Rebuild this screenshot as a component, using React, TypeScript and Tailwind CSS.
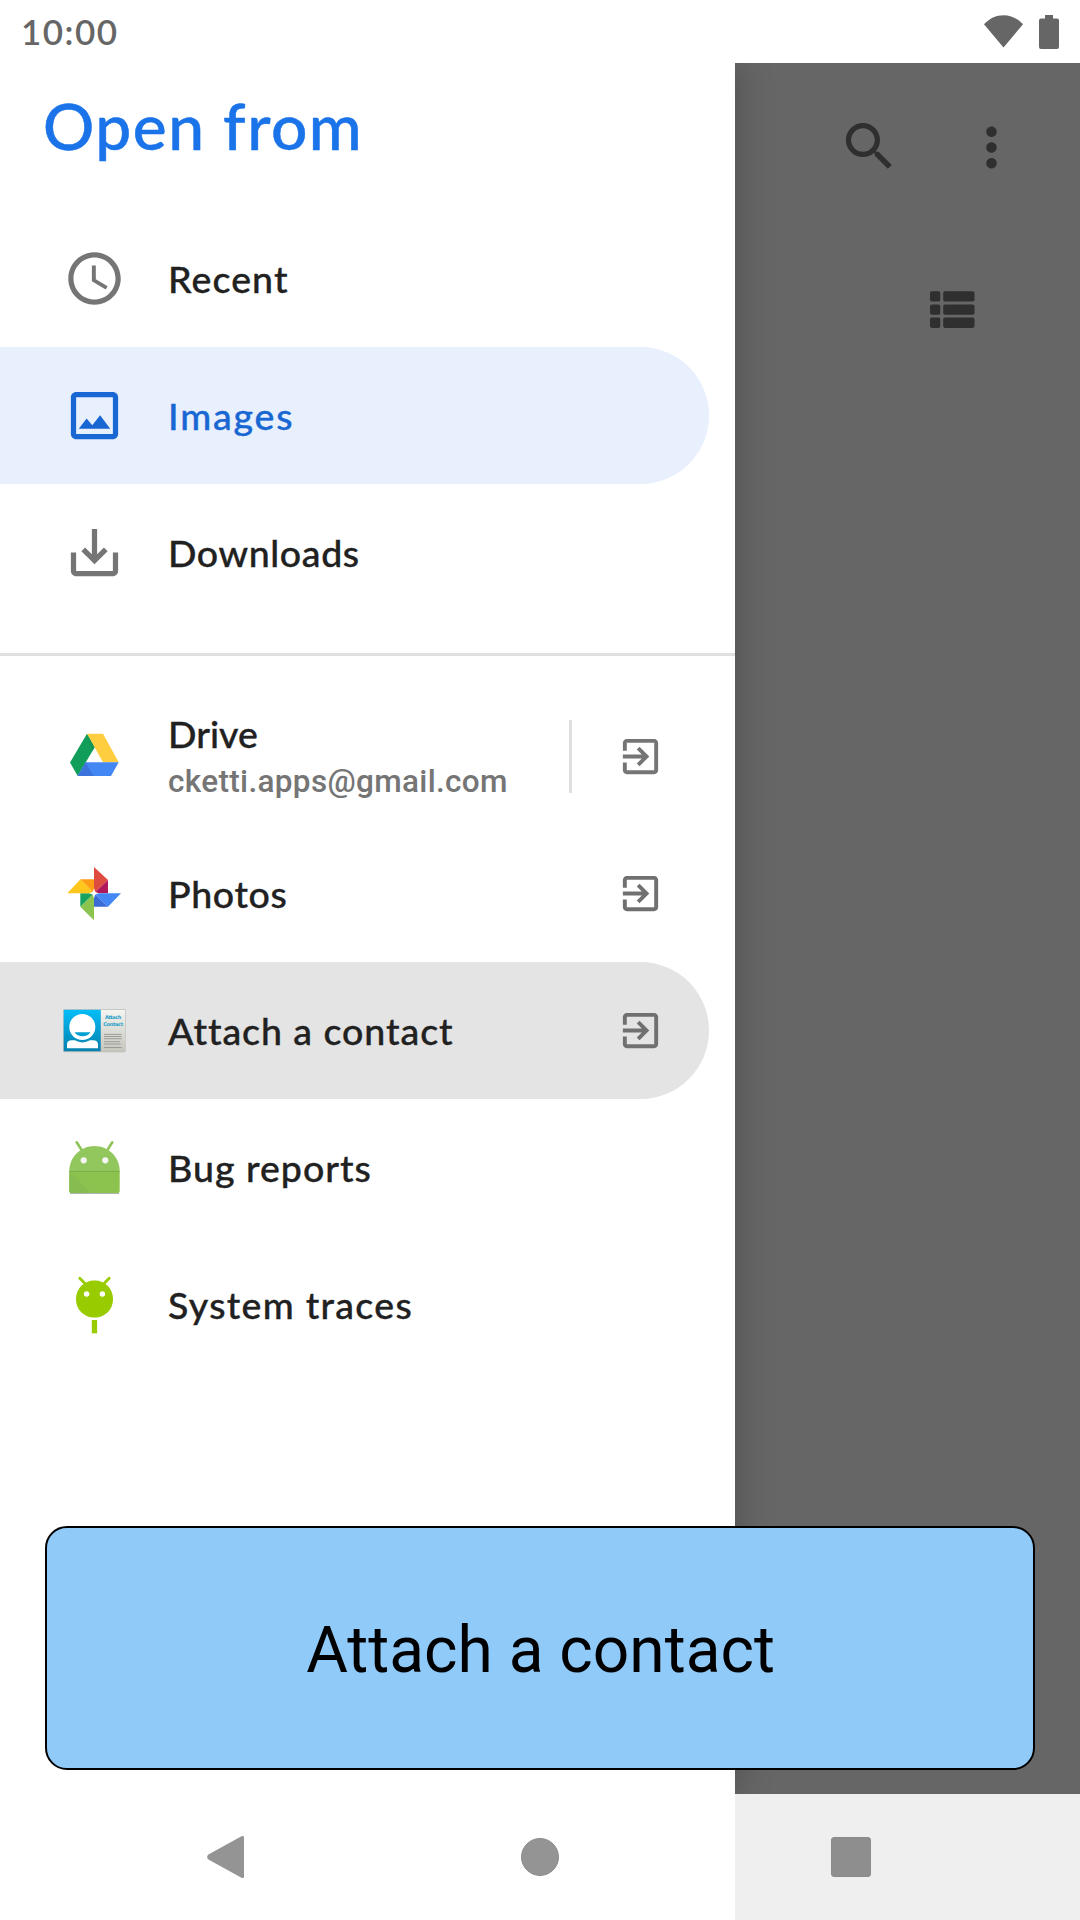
import React from "react";
import type { ReactNode } from "react";

const ROW = "flex h-[137px] shrink-0 items-center pl-[63px]";
const LABEL =
  "pt-px font-['Lato',sans-serif] text-[37.5px] font-medium leading-[44px] whitespace-nowrap [-webkit-text-stroke:0.35px] [font-variant-ligatures:none]";

function MaterialIcon({ d, className }: { d: string; className: string }) {
  return (
    <svg viewBox="0 0 24 24" fill="currentColor" className={className}>
      <path d={d} />
    </svg>
  );
}

const PATHS = {
  clock:
    "M11.99 2C6.47 2 2 6.48 2 12s4.47 10 9.99 10C17.52 22 22 17.52 22 12S17.52 2 11.99 2zM12 20c-4.42 0-8-3.58-8-8s3.58-8 8-8 8 3.58 8 8-3.58 8-8 8zM12.5 7H11v6l5.25 3.15.75-1.23-4.5-2.67z",
  image:
    "M19 5v14H5V5h14m0-2H5c-1.1 0-2 .9-2 2v14c0 1.1.9 2 2 2h14c1.1 0 2-.9 2-2V5c0-1.1-.9-2-2-2zm-4.86 8.86l-3 3.87L9 13.14 6 17h12l-3.86-5.14z",
  download:
    "M19 12v7H5v-7H3v7c0 1.1.9 2 2 2h14c1.1 0 2-.9 2-2v-7h-2zm-6 .67l2.59-2.58L17 11.5l-5 5-5-5 1.41-1.41L11 12.67V3h2v9.67z",
  exit: "M10.09 15.59L11.5 17l5-5-5-5-1.41 1.41L12.67 11H3v2h9.67l-2.58 2.59zM19 3H5c-1.11 0-2 .9-2 2v4h2V5h14v14H5v-4H3v4c0 1.1.89 2 2 2h14c1.1 0 2-.9 2-2V5c0-1.1-.9-2-2-2z",
  search:
    "M15.5 14h-.79l-.28-.27C15.41 12.59 16 11.11 16 9.5 16 5.91 13.09 3 9.5 3S3 5.91 3 9.5 5.91 16 9.5 16c1.61 0 3.09-.59 4.23-1.57l.27.28v.79l5 4.99L20.49 19l-4.99-5zm-6 0C7.01 14 5 11.99 5 9.5S7.01 5 9.5 5 14 7.01 14 9.5 11.99 14 9.5 14z",
  more: "M12 8c1.1 0 2-.9 2-2s-.9-2-2-2-2 .9-2 2 .9 2 2 2zm0 2c-1.1 0-2 .9-2 2s.9 2 2 2 2-.9 2-2-.9-2-2-2zm0 6c-1.1 0-2 .9-2 2s.9 2 2 2 2-.9 2-2-.9-2-2-2z",
};

const ICON = "size-[63px] shrink-0";

function DriveIcon() {
  return (
    <svg viewBox="3 0 63 63" className={ICON}>
      <path d="M27 8.7 34.7 22.2 17.7 51 10 37.5z" fill="#119e5a" />
      <path d="M27 8.7H43L58.7 37.3H43z" fill="#ffcd40" />
      <path d="M25.7 37.3H58.7L51 51H17.7z" fill="#4387f5" />
      <path d="M25.7 37.3 33.5 51H17.7z" fill="#3a73db" />
      <path d="M27 8.7 34.7 22.2 32.4 26z" fill="#0c8a4c" opacity=".5" />
    </svg>
  );
}

function PhotosIcon() {
  return (
    <svg viewBox="3 2 63 63" className={ICON}>
      <path d="M34 7 48 20 34 33.2z" fill="#de4c3f" />
      <path d="M48 20V33.2H34z" fill="#b0185c" />
      <path d="M34 33.2H61L48 46.8z" fill="#4387f5" />
      <path d="M34 33.2 48 46.8H34z" fill="#3a6bd6" />
      <path d="M34 33.2V60.2L20.3 46.8z" fill="#8cc450" />
      <path d="M20.3 33.2H34L20.3 46.8z" fill="#17a260" />
      <path d="M7.3 33.2 20.5 19.3 34 33.2z" fill="#ffc61c" />
      <path d="M20.5 19.3H34V33.2z" fill="#ff9e15" />
      <path d="M34 28.2 35.3 32 39 33.2 35.3 34.5 34 38.3 32.7 34.5 29 33.2 32.7 32z" fill="#fff" />
    </svg>
  );
}

function ContactIcon() {
  return (
    <svg viewBox="23 39 63 63" className={ICON}>
      <defs>
        <linearGradient id="cardBlue" x1="0" y1="0" x2="0" y2="1">
          <stop offset="0" stopColor="#05bdf8" />
          <stop offset="1" stopColor="#0480ad" />
        </linearGradient>
        <linearGradient id="cardPaper" x1="0" y1="0" x2="0" y2="1">
          <stop offset="0" stopColor="#f4f4f0" />
          <stop offset="1" stopColor="#c6c6be" />
        </linearGradient>
      </defs>
      <rect x="23.2" y="49.2" width="62.4" height="43" rx="1" fill="#bdbdb8" />
      <rect x="23.7" y="49.8" width="37" height="41.4" fill="url(#cardBlue)" />
      <rect x="61" y="50" width="24" height="41.4" fill="url(#cardPaper)" />
      <circle cx="42.3" cy="67" r="13" fill="#fff" />
      <path d="M34.7 72.3H50.3C48 77.6 37 77.6 34.7 72.3z" fill="#069fd2" />
      <path d="M27 88.2V84.5Q27 80.3 32 80.3H34.8Q42.3 84.5 50 80.3H52.8Q58 80.3 58 84.5V88.2z" fill="#fff" />
      <g
        fill="#1c9ccb"
        textAnchor="middle"
        className="font-['DejaVu_Sans',sans-serif] text-[5.1px] font-bold"
      >
        <text x="73.2" y="59.2" textLength="16.5">Attach</text>
        <text x="73.2" y="65.9" textLength="20">Contact</text>
      </g>
      <path
        d="M64 74.4H81.6M64 76.5H81.6M64 78.7H81.6M64 81.7H80M64 84H80.6M64 87.5H81.6"
        stroke="#8f8f8a"
        strokeWidth=".8"
      />
    </svg>
  );
}

function BugIcon() {
  return (
    <svg viewBox="13 26 63 63" className={ICON}>
      <path d="M20.5 83.4H68.5" stroke="#000" strokeOpacity=".3" strokeWidth="1.2" strokeLinecap="round" />
      <path d="M26.7 32.3 31.2 39.4M62.3 32.3 57.8 39.4" stroke="#8fc558" strokeWidth="2.7" strokeLinecap="round" />
      <path d="M19.3 61C19.3 47 30.6 36 44.5 36S69.7 47 69.7 61z" fill="#91c75c" />
      <path d="M19.3 61H69.7V80.4Q69.7 83 67 83H22Q19.3 83 19.3 80.4z" fill="#8bc34e" />
      <path d="M19.3 61 41 83H22Q19.3 83 19.3 80.4z" fill="#87bd50" />
      <path d="M19.3 61.4H69.7" stroke="#77a946" strokeWidth=".8" />
      <circle cx="33.7" cy="50.3" r="3.1" fill="#f5f5f5" />
      <circle cx="55.3" cy="50.3" r="3.1" fill="#f5f5f5" />
    </svg>
  );
}

function TracesIcon() {
  return (
    <svg viewBox="13 163 63 63" className={ICON}>
      <path d="M29.8 168.3 35.5 174M59.2 168.3 53.5 174" stroke="#9c0" strokeWidth="2.8" strokeLinecap="round" />
      <rect x="26" y="170.6" width="37" height="37" rx="18" fill="#9c0" />
      <rect x="41.8" y="210" width="5.3" height="13.3" fill="#9c0" />
      <circle cx="36.6" cy="184" r="2.7" fill="#fff" />
      <circle cx="52.4" cy="184" r="2.7" fill="#fff" />
    </svg>
  );
}

function Row({
  icon,
  label,
  tracking,
  tone = "text-[#212121]",
  background = "",
  exit = false,
}: {
  icon: ReactNode;
  label: string;
  tracking: string;
  tone?: string;
  background?: string;
  exit?: boolean;
}) {
  return (
    <div className={`${ROW} mr-[26px] rounded-r-full ${background}`}>
      {icon}
      <span className={`${LABEL} ml-[42px] flex-1 ${tracking} ${tone}`}>{label}</span>
      {exit && <MaterialIcon d={PATHS.exit} className="mr-[45px] size-[47px] text-[#707070]" />}
    </div>
  );
}

function Drawer() {
  return (
    <div className="flex w-[735px] shrink-0 flex-col bg-white shadow-[0_0_34px_rgba(0,0,0,0.25)]">
      <div className="flex h-[147px] shrink-0 items-center pb-[22px] pl-[43px]">
        <h1 className="font-['Lato',sans-serif] text-[64px] font-medium leading-[64px] tracking-[1.5px] text-[#1a73e8] [-webkit-text-stroke:0.5px]">
          Open from
        </h1>
      </div>
      <Row icon={<MaterialIcon d={PATHS.clock} className={`${ICON} text-[#757575]`} />} label="Recent" tracking="tracking-[1.1px]" />
      <Row
        icon={<MaterialIcon d={PATHS.image} className={`${ICON} text-[#1967d2]`} />}
        label="Images"
        tracking="tracking-[1.8px]"
        tone="text-[#1967d2]"
        background="bg-[#e8f0fe]"
      />
      <Row icon={<MaterialIcon d={PATHS.download} className={`${ICON} text-[#757575]`} />} label="Downloads" tracking="tracking-[0.6px]" />
      <div className="mt-[32px] mb-[32px] h-[3px] shrink-0 bg-[#e0e0e0]" />
      <div className={`${ROW} mr-[26px]`}>
        <DriveIcon />
        <div className="ml-[42px] flex w-[401px] flex-col pt-[5px]">
          <span className="font-['Lato',sans-serif] text-[37.5px] font-medium leading-[44px] text-[#212121] [-webkit-text-stroke:0.35px]">
            Drive
          </span>
          <span className="font-['Roboto',sans-serif] text-[31.5px] font-medium leading-[51px] tracking-[0.33px] text-[#757575]">
            cketti.apps@gmail.com
          </span>
        </div>
        <div className="h-[73px] w-[3px] bg-[#e0e0e0]" />
        <MaterialIcon d={PATHS.exit} className="mr-[45px] ml-auto size-[47px] text-[#757575]" />
      </div>
      <Row icon={<PhotosIcon />} label="Photos" tracking="tracking-[0.65px]" exit />
      <Row icon={<ContactIcon />} label="Attach a contact" tracking="tracking-[0.95px]" background="bg-[#e4e4e4]" exit />
      <Row icon={<BugIcon />} label="Bug reports" tracking="tracking-[1px]" />
      <Row icon={<TracesIcon />} label="System traces" tracking="tracking-[1.3px]" />
    </div>
  );
}

function StatusBar() {
  return (
    <div className="relative z-10 flex h-[63px] shrink-0 items-center bg-white pr-[21px] pl-[21px] text-[#666]">
      <span className="flex-1 font-['Lato',sans-serif] text-[35px] font-semibold leading-[35px] tracking-[1.5px]">10:00</span>
      <svg viewBox="0 0 39 34" fill="currentColor" className="mr-[16px] h-[34px] w-[39px]">
        <path d="M19.5 32.5 0 9.2C5.5 3.4 12 .2 19.5 .2S33.5 3.4 39 9.2z" />
      </svg>
      <svg viewBox="0 0 20 34" fill="currentColor" className="h-[34px] w-[20px]">
        <path d="M6 0H14V3.5H18Q20 3.5 20 5.5V32Q20 34 18 34H2Q0 34 0 32V5.5Q0 3.5 2 3.5H6z" />
      </svg>
    </div>
  );
}

function DimmedPane() {
  return (
    <div className="flex flex-1 flex-col bg-[#666] text-[#2f2f2f]">
      <div className="mt-[52px] flex justify-end gap-[59px] pr-[57px]">
        <MaterialIcon d={PATHS.search} className="size-[63px]" />
        <MaterialIcon d={PATHS.more} className="mt-px -mb-px size-[63px]" />
      </div>
      <div className="mt-[113px] flex justify-end pr-[105px]">
        <svg viewBox="0 0 45 37" fill="currentColor" className="h-[37px] w-[45px]">
          {[0.3, 13.4, 26.6].map((y) => (
            <g key={y}>
              <rect x="0" y={y} width="10.3" height="10.3" rx="1.8" />
              <rect x="13.2" y={y} width="31.3" height="10.3" rx="1.8" />
            </g>
          ))}
        </svg>
      </div>
    </div>
  );
}

function NavigationBar() {
  return (
    <div className="relative z-10 flex h-[126px] shrink-0 text-[#949494]">
      <div className="flex w-[735px] items-center bg-white pl-[207px]">
        <svg viewBox="0 0 37 42" fill="currentColor" className="h-[42px] w-[37px]">
          <path d="M34.5 .3Q37 -.8 37 1.8V40.2Q37 42.8 34.5 41.7L1.4 23.4Q-1.2 21 1.4 18.6z" />
        </svg>
        <div className="ml-[277px] size-[38px] rounded-full border border-[#8c8c8c] bg-[#949494]" />
      </div>
      <div className="flex flex-1 items-center bg-[#efefef] pl-[96px]">
        <div className="size-[40px] rounded-[3px] border border-[#8a8a8a] bg-[#8e8e8e]" />
      </div>
    </div>
  );
}

export default function App() {
  return (
    <div className="relative flex h-[1920px] w-[1080px] flex-col overflow-hidden bg-white">
      <StatusBar />
      <div className="flex min-h-0 flex-1">
        <div className="z-[1] flex">
          <Drawer />
        </div>
        <DimmedPane />
      </div>
      <NavigationBar />
      <div className="absolute top-[1526px] left-[45px] z-20 flex h-[244px] w-[990px] items-center justify-center rounded-[22px] border-2 border-black bg-[#90caf9] pt-[6px] pl-px font-['Roboto',sans-serif] text-[64px] leading-[76px] text-black">
        Attach a contact
      </div>
    </div>
  );
}
